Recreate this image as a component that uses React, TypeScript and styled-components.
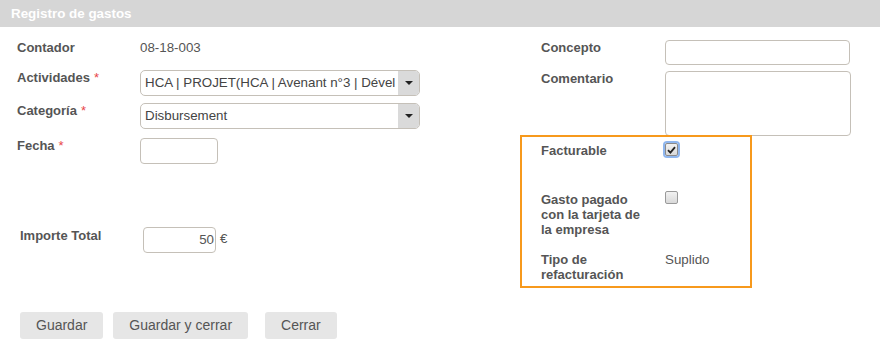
import * as React from "react";
import styled, { createGlobalStyle } from "styled-components";

const GlobalStyle = createGlobalStyle`
  body {
    margin: 0;
    background: #ffffff;
    font-family: "Liberation Sans", Arial, sans-serif;
    font-size: 13px;
    color: #555555;
  }
`;

const Page = styled.div`
  width: 880px;
  height: 345px;
  overflow: hidden;
`;

const Header = styled.div`
  height: 27px;
  background: #d6d6d6;
  color: #ffffff;
  font-weight: bold;
  font-size: 13.4px;
  line-height: 27px;
  padding-left: 11px;
`;

const Body = styled.div`
  display: grid;
  grid-template-columns: 520px 1fr;
  padding-top: 13px;
  align-items: start;
`;

const Column = styled.div<{ $left?: number }>`
  display: flex;
  flex-direction: column;
  padding-left: ${props => props.$left || 0}px;
`;

const Row = styled.div<{ $mt?: number; $h?: number }>`
  display: flex;
  align-items: flex-start;
  margin-top: ${props => props.$mt || 0}px;
  min-height: ${props => (props.$h ? props.$h + "px" : "auto")};
`;

const Label = styled.div<{ $w: number; $top?: number; $wrap?: number; $indent?: number }>`
  width: ${props => props.$w}px;
  flex: none;
  box-sizing: border-box;
  padding-left: ${props => props.$indent || 0}px;
  padding-right: ${props => (props.$wrap ? props.$w - props.$wrap : 0)}px;
  padding-top: ${props => props.$top || 0}px;
  font-weight: bold;
  line-height: 15px;
  color: #555555;
`;

const Required = styled.span`
  color: #e8454a;
  font-weight: normal;
  margin-left: 4px;
`;

const Value = styled.div<{ $top?: number }>`
  font-size: 13.33px;
  line-height: 15px;
  padding-top: ${props => props.$top || 0}px;
  color: #555555;
`;

const Select = styled.div`
  display: flex;
  width: 280px;
  height: 26px;
  box-sizing: border-box;
  border: 1px solid #c5c0b8;
  border-radius: 5px;
  overflow: hidden;
  background: #ffffff;
`;

const SelectText = styled.div`
  flex: 1;
  min-width: 0;
  padding-left: 4px;
  line-height: 24px;
  font-size: 13.33px;
  color: #444444;
  white-space: nowrap;
  overflow: hidden;
`;

const SelectButton = styled.div`
  width: 21px;
  flex: none;
  background: #dadada;
  display: flex;
  align-items: center;
  justify-content: center;
`;

const Caret = styled.div`
  width: 0;
  height: 0;
  border-left: 4px solid transparent;
  border-right: 4px solid transparent;
  border-top: 4px solid #222222;
`;

const Input = styled.div<{ $w: number; $h?: number }>`
  width: ${props => props.$w}px;
  height: ${props => props.$h || 26}px;
  box-sizing: border-box;
  border: 1px solid #c5c0b8;
  border-radius: 4px;
  background: #ffffff;
  padding: 0 1px;
  text-align: right;
  font-size: 13.33px;
  line-height: ${props => (props.$h || 26) - 2}px;
  color: #555555;
`;

const Unit = styled.span`
  margin-left: 4px;
  font-size: 13.33px;
  line-height: 24px;
  color: #555555;
`;

const Highlight = styled.div`
  margin-top: -1px;
  width: 232px;
  box-sizing: border-box;
  border: 2px solid #f7991c;
  padding: 6px 0 4px 19px;
`;

const Check = styled.div<{ $checked?: boolean; $top?: number }>`
  width: 13px;
  height: 13px;
  box-sizing: border-box;
  margin-top: ${props => props.$top || 0}px;
  border: 1px solid ${props => (props.$checked ? "#8a8a8a" : "#9a9a9a")};
  border-radius: 2px;
  background: linear-gradient(#f2f2f2, #d9d9d9);
  box-shadow: ${props => (props.$checked ? "0 0 0 2px #8fb6ee" : "none")};
  display: flex;
  align-items: center;
  justify-content: center;
`;

const Footer = styled.div`
  display: flex;
  padding: 24px 0 0 20px;
`;

const Button = styled.div<{ $ml?: number }>`
  height: 27px;
  line-height: 27px;
  padding: 0 16px;
  margin-left: ${props => props.$ml || 0}px;
  background: #e6e6e6;
  border-radius: 3px;
  color: #555555;
  font-size: 14px;
`;

export default function App() {
  return (
    <Page>
      <GlobalStyle />
      <Header>Registro de gastos</Header>
      <Body>
        <Column $left={17}>
          <Row $h={30}>
            <Label $w={123}>Contador</Label>
            <Value>08-18-003</Value>
          </Row>
          <Row>
            <Label $w={123}>Actividades<Required>*</Required></Label>
            <Select>
              <SelectText>HCA | PROJET(HCA | Avenant n°3 | Dével</SelectText>
              <SelectButton><Caret /></SelectButton>
            </Select>
          </Row>
          <Row $mt={7}>
            <Label $w={123}>Categoría<Required>*</Required></Label>
            <Select>
              <SelectText>Disbursement</SelectText>
              <SelectButton><Caret /></SelectButton>
            </Select>
          </Row>
          <Row $mt={9}>
            <Label $w={123}>Fecha<Required>*</Required></Label>
            <Input $w={78} />
          </Row>
          <Row $mt={63}>
            <Label $w={126} $top={1} $indent={3}>Importe Total</Label>
            <Input $w={73}>50</Input>
            <Unit>€</Unit>
          </Row>
        </Column>
        <Column>
          <Row>
            <Label $w={145} $indent={21}>Concepto</Label>
            <Input $w={185} $h={25} />
          </Row>
          <Row $mt={6}>
            <Label $w={145} $indent={21}>Comentario</Label>
            <Input $w={186} $h={65} />
          </Row>
          <Highlight>
            <Row $h={48}>
              <Label $w={124}>Facturable</Label>
              <Check $checked>
                <svg width="9" height="8" viewBox="0 0 9 8">
                  <path d="M1 4.2 L3.4 6.6 L8 1.2" fill="none" stroke="#222" strokeWidth="1.8" />
                </svg>
              </Check>
            </Row>
            <Row $h={61}>
              <Label $w={124} $wrap={110} $top={1}>Gasto pagado con la tarjeta de la empresa</Label>
              <Check />
            </Row>
            <Row>
              <Label $w={124} $wrap={110}>Tipo de refacturación</Label>
              <Value>Suplido</Value>
            </Row>
          </Highlight>
        </Column>
      </Body>
      <Footer>
        <Button>Guardar</Button>
        <Button $ml={10}>Guardar y cerrar</Button>
        <Button $ml={17}>Cerrar</Button>
      </Footer>
    </Page>
  );
}
